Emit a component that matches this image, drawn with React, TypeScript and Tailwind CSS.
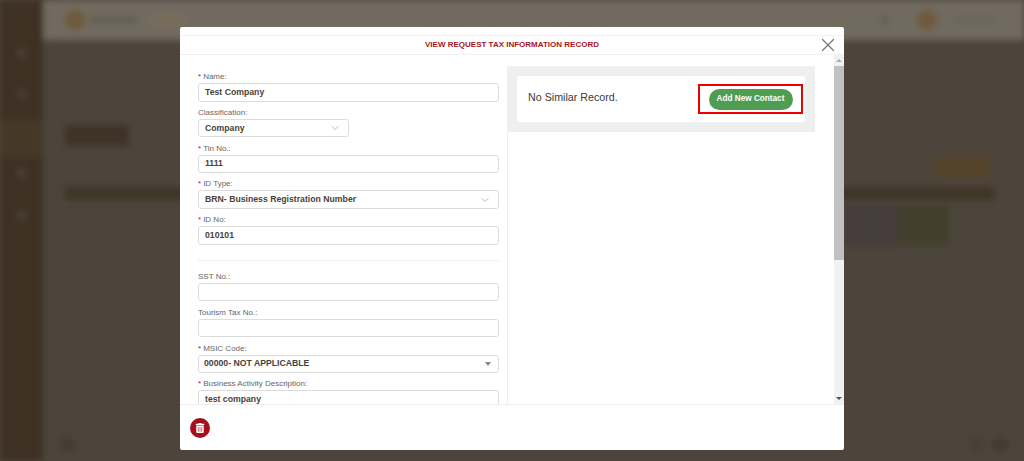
import { X, ChevronDown } from "lucide-react";
import { FaTrashAlt } from "react-icons/fa";

const Field = (props: any) => {
  return (
    <div className="h-[35.8px]">
      <p className="h-[17px] pt-[6px] text-[8px] leading-[10px] text-[#666]">
        {props.required && <span className="text-[#c8102e] mr-[2px]">*</span>}
        {props.label}
      </p>
      <div
        className={`h-[18.5px] flex items-center justify-between border border-[#dcdcdc] rounded-[3px] bg-white pr-[7px] text-[8.7px] font-bold text-[#4a4238] ${props.caret ? "pl-[5px]" : "pl-[6px]"} ${props.width ?? "w-[301px]"}`}
      >
        <span className="whitespace-nowrap">{props.value}</span>
        {props.select && <ChevronDown size={12} strokeWidth={2} className="text-[#bbb]" />}
        {props.caret && <span className="w-0 h-0 border-x-[3px] border-x-transparent border-t-[4px] border-t-[#888]" />}
      </div>
    </div>
  );
};

const BackgroundPage = () => {
  return (
    <div className="h-[461px] w-[1024px] flex bg-[#4d453b] overflow-hidden">
      <div className="w-[43px] shrink-0 bg-[#3e3124] flex flex-col items-center pt-[48px] blur-[3px]">
        <div className="w-[10px] h-[10px] rounded-full bg-[#4b4035]" />
        <div className="w-[10px] h-[10px] mt-[31px] rounded-full bg-[#4b4035]" />
        <div className="w-[43px] h-[37px] mt-[21px] bg-[#463827]" />
        <div className="w-[10px] h-[10px] mt-[11px] rounded-full bg-[#4b4035]" />
        <div className="w-[10px] h-[10px] mt-[32px] rounded-full bg-[#4b4035]" />
      </div>
      <div className="flex-1 flex flex-col blur-[3px]">
        <div className="h-[40px] bg-[#716a5f] flex items-center pl-[22px] pr-[30px]">
          <div className="w-[20px] h-[20px] rounded-full bg-[#6f5a3c]" />
          <div className="w-[46px] h-[6px] ml-[6px] bg-[#625b50]" />
          <div className="w-[40px] h-[14px] ml-[10px] bg-[#766c5c]" />
          <div className="w-[12px] h-[12px] ml-auto mr-[26px] rounded-full bg-[#696256]" />
          <div className="w-[20px] h-[20px] mr-[17px] rounded-full bg-[#6f5a3c]" />
          <div className="w-[40px] h-[6px] bg-[#6a6358]" />
        </div>
        <div className="flex-1 flex flex-col pl-[22px] pr-[30px] pt-[85px]">
          <div className="w-[64px] h-[21px] bg-[#3e3327] rounded-[2px]" />
          <div className="self-end w-[56px] h-[20px] mt-[11px] mr-[4px] bg-[#54442a] rounded-[2px]" />
          <div className="h-[13px] mt-[10px] bg-[#3f3527]" />
          <div className="flex justify-end mt-[5px] pr-[44px]">
            <div className="w-[54px] h-[41px] bg-[#453c3c]" />
            <div className="w-[52px] h-[41px] bg-[#42402d]" />
          </div>
          <div className="flex justify-between mt-auto mb-[8px] -ml-[6px] -mr-[14px]">
            <div className="w-[16px] h-[16px] rounded-full bg-[#433d33]" />
            <div className="flex gap-[7px]">
              <div className="w-[16px] h-[16px] rounded-full bg-[#454234]" />
              <div className="w-[16px] h-[16px] rounded-full bg-[#433b33]" />
            </div>
          </div>
        </div>
      </div>
    </div>
  );
};

const App = () => {
  return (
    <div className="relative h-[461px] w-[1024px] overflow-hidden font-['Liberation_Sans',Arial,sans-serif]">
      <BackgroundPage />
      <div className="absolute left-[180px] top-[27px] w-[664px] h-[423px] bg-white flex flex-col rounded-[2px]">
        <div className="h-[20px] mt-[8px] shrink-0 relative flex items-center justify-center border-y border-[#f1f1f1]">
          <p className="text-[8px] font-bold text-[#a8151f]">VIEW REQUEST TAX INFORMATION RECORD</p>
          <X size={22} strokeWidth={1.3} className="absolute right-[5px] top-[-2px] text-[#777]" />
        </div>
        <div className="flex-1 min-h-0 flex overflow-hidden">
          <div className="w-[327px] shrink-0 pl-[18px] pt-[11px]">
            <Field required label="Name:" value="Test Company" />
            <Field label="Classification:" value="Company" select width="w-[151px]" />
            <Field required label="Tin No.:" value="1111" />
            <Field required label="ID Type:" value="BRN- Business Registration Number" select />
            <Field required label="ID No:" value="010101" />
            <div className="w-[301px] border-t border-[#eee] mt-[15px] mb-[5px]" />
            <Field label="SST No.:" value="" />
            <Field label="Tourism Tax No.:" value="" />
            <Field required label="MSIC Code:" value="00000- NOT APPLICABLE" caret />
            <Field required label="Business Activity Description:" value="test company" />
          </div>
          <div className="w-[327px] mt-[11px] border-l border-[#eee]">
            <div className="w-[308px] h-[66px] -ml-[1px] bg-[#efefef] p-[10px]">
              <div className="h-[46px] bg-white rounded-[2px] flex items-center justify-between pl-[11px] pr-[2px]">
                <p className="mb-[3px] text-[10.7px] text-[#3a3a3a]">No Similar Record.</p>
                <div className="w-[105px] h-[30px] border-2 border-[#ee0000] flex items-center justify-center">
                  <span className="w-[84px] h-[21px] rounded-full bg-[#4f9d52] flex items-center justify-center text-[8.2px] font-bold text-white">
                    Add New Contact
                  </span>
                </div>
              </div>
            </div>
          </div>
          <div className="w-[10px] shrink-0 bg-[#f1f1f1] flex flex-col items-center justify-between pt-[4px] pb-[4px]">
            <span className="w-0 h-0 border-x-[3px] border-x-transparent border-b-[3px] border-b-[#aaa]" />
            <div className="w-[10px] h-[194px] mt-[4px] mb-auto bg-[#c1c1c1]" />
            <span className="w-0 h-0 border-x-[3px] border-x-transparent border-t-[3px] border-t-[#505050]" />
          </div>
        </div>
        <div className="h-[46px] shrink-0 border-t border-[#eee] flex items-center pl-[10px]">
          <button className="w-[20px] h-[20px] rounded-full bg-[#a50e1b] flex items-center justify-center">
            <FaTrashAlt size={10} className="text-white" />
          </button>
        </div>
      </div>
    </div>
  );
};

export default App;
